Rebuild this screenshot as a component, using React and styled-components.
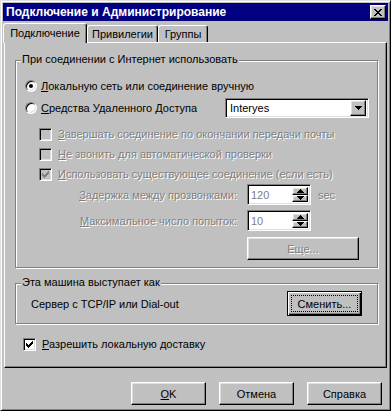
import React from "react";
import styled, { createGlobalStyle, css } from "styled-components";

const GlobalStyle = createGlobalStyle`
  body {
    margin: 0;
    background: #c0c0c0;
    font-family: "Liberation Sans", Arial, sans-serif;
    font-size: 11px;
    color: #000;
  }
`;

const raised = css`
  border: 1px solid;
  border-color: #fff #000 #000 #fff;
  box-shadow: inset -1px -1px #808080, inset 1px 1px #dfdfdf;
`;

const sunken = css`
  border: 1px solid;
  border-color: #808080 #fff #fff #808080;
  box-shadow: inset 1px 1px #000, inset -1px -1px #dfdfdf;
`;

const CLOSE_X = [
  "XX....XX",
  ".XX..XX.",
  "..XXXX..",
  "...XX...",
  "..XXXX..",
  ".XX..XX.",
  "XX....XX",
];
const CHECK = [
  "......X",
  ".....XX",
  "X...XXX",
  "XX.XXX.",
  "XXXXX..",
  ".XXX...",
  "..X....",
];
const ARROW_DOWN = ["XXXXXXX", ".XXXXX.", "..XXX..", "...X..."];
const ARROW_UP = [...ARROW_DOWN].reverse();

const Pixels = ({ rows, color = "#000" }) => (
  <svg
    width={rows[0].length}
    height={rows.length}
    shapeRendering="crispEdges"
    style={{ display: "block" }}
  >
    {rows.flatMap((r, y) =>
      [...r].map((c, x) =>
        c === "X" ? (
          <rect key={`${x}-${y}`} x={x} y={y} width="1" height="1" fill={color} />
        ) : null
      )
    )}
  </svg>
);

const Checkbox = ({ checked, disabled }) => (
  <CheckBoxBox $disabled={disabled}>
    {checked && <Pixels rows={CHECK} color={disabled ? "#808080" : "#000"} />}
  </CheckBoxBox>
);

const Radio = ({ checked }) => (
  <RadioBox>{checked && <RadioDot />}</RadioBox>
);

const Spin = ({ value }) => (
  <SpinBox>
    <SpinValue>{value}</SpinValue>
    <SpinButtons>
      <SpinButton>
        <Pixels rows={ARROW_UP} />
      </SpinButton>
      <SpinButton>
        <Pixels rows={ARROW_DOWN} />
      </SpinButton>
    </SpinButtons>
  </SpinBox>
);

const App = () => {
  return (
    <>
      <GlobalStyle />
      <Window>
        <TitleBar>
          <span>Подключение и Администрирование</span>
          <CloseButton>
            <Pixels rows={CLOSE_X} />
          </CloseButton>
        </TitleBar>

        <Body>
          <TabRow>
            <Tab $w={84} $active $ml={-1}>
              Подключение
            </Tab>
            <Tab $w={71}>Привилегии</Tab>
            <Tab $w={50}>Группы</Tab>
          </TabRow>

          <Panel>
            <GroupBox $h={208} $mt={0} $pad="0 8px 0 9px">
              <Legend>При соединении с Интернет использовать</Legend>

              <Row $h={16} $mt={17}>
                <Radio checked />
                <Label $ml={4}>
                  <U>Л</U>окальную сеть или соединение вручную
                </Label>
              </Row>

              <Row $h={20} $mt={4}>
                <Radio />
                <Label $ml={4}>
                  <U>С</U>редства Удаленного Доступа
                </Label>
                <Combo>
                  <ComboText>Interyes</ComboText>
                  <ComboButton>
                    <Pixels rows={ARROW_DOWN} />
                  </ComboButton>
                </Combo>
              </Row>

              <Row $h={16} $mt={8} $pl={14}>
                <Checkbox disabled />
                <Label $ml={6} $disabled>
                  <U>З</U>авершать соединение по окончании передачи почты
                </Label>
              </Row>

              <Row $h={16} $mt={4} $pl={14}>
                <Checkbox disabled />
                <Label $ml={6} $disabled>
                  <U>Н</U>е звонить для автоматической проверки
                </Label>
              </Row>

              <Row $h={16} $mt={4} $pl={14}>
                <Checkbox checked disabled />
                <Label $ml={6} $disabled>
                  <U>И</U>спользовать существующее соединение (если есть)
                </Label>
              </Row>

              <Row $h={21} $mt={2}>
                <FieldLabel>
                  <U>З</U>адержка между прозвонками:
                </FieldLabel>
                <Spin value="120" />
                <Label $ml={7} $disabled>
                  sec
                </Label>
              </Row>

              <Row $h={21} $mt={5}>
                <FieldLabel>
                  <U>М</U>аксимальное число попыток:
                </FieldLabel>
                <Spin value="10" />
              </Row>

              <Row $h={23} $mt={6}>
                <Button $w={112} $ml={222} disabled>
                  Еще...
                </Button>
              </Row>
            </GroupBox>

            <GroupBox $h={41} $mt={15} $pad="0 15px 0 15px">
              <Legend>Эта машина выступает как</Legend>
              <Row $h={39}>
                <Label>Сервер с TCP/IP или Dial-out</Label>
                <DefaultButton>
                  <FocusRing>Сменить...</FocusRing>
                </DefaultButton>
              </Row>
            </GroupBox>

            <Row $h={16} $mt={12} $pl={8}>
              <Checkbox checked />
              <Label $ml={6}>
                <U>Р</U>азрешить локальную доставку
              </Label>
            </Row>
          </Panel>
        </Body>

        <ButtonRow>
          <Button $w={75}>
            <U>O</U>K
          </Button>
          <Button $w={75}>Отмена</Button>
          <Button $w={75}>Справка</Button>
        </ButtonRow>
      </Window>
    </>
  );
};

const Window = styled.div`
  box-sizing: border-box;
  width: 391px;
  height: 411px;
  padding: 2px;
  background: #c0c0c0;
  border: 1px solid;
  border-color: #dfdfdf #000 #000 #dfdfdf;
  box-shadow: inset 1px 1px #fff, inset -1px -1px #808080;
  display: flex;
  flex-direction: column;
`;

const TitleBar = styled.div`
  height: 18px;
  flex-shrink: 0;
  background: #000080;
  color: #fff;
  font-size: 12px;
  font-weight: bold;
  display: flex;
  align-items: center;
  justify-content: space-between;
  padding: 0 2px 0 3px;
`;

const CloseButton = styled.div`
  ${raised};
  box-sizing: border-box;
  width: 16px;
  height: 14px;
  background: #c0c0c0;
  display: flex;
  align-items: center;
  justify-content: center;
`;

const Body = styled.div`
  padding: 2px 1px 0 1px;
`;

const TabRow = styled.div`
  display: flex;
  align-items: flex-end;
  height: 19px;
`;

const Tab = styled.div`
  box-sizing: border-box;
  width: ${(p) => p.$w}px;
  height: ${(p) => (p.$active ? 20 : 17)}px;
  margin-left: ${(p) => p.$ml || 0}px;
  margin-bottom: ${(p) => (p.$active ? -1 : 0)}px;
  padding-bottom: ${(p) => (p.$active ? 2 : 0)}px;
  border: 1px solid;
  border-bottom: none;
  border-color: #fff #000 transparent #fff;
  border-radius: 3px 3px 0 0;
  box-shadow: inset -1px 0 #808080;
  background: #c0c0c0;
  position: relative;
  z-index: ${(p) => (p.$active ? 1 : 0)};
  display: flex;
  align-items: center;
  justify-content: center;
`;

const Panel = styled.div`
  box-sizing: border-box;
  height: 326px;
  border: 1px solid;
  border-color: #fff #000 #000 #fff;
  box-shadow: inset -1px -1px #808080;
  padding: 17px 8px 0 10px;
  display: flex;
  flex-direction: column;
`;

const GroupBox = styled.div`
  position: relative;
  box-sizing: border-box;
  height: ${(p) => p.$h}px;
  margin-top: ${(p) => p.$mt}px;
  border: 1px solid #808080;
  box-shadow: inset 1px 1px #fff, 1px 1px #fff;
  padding: ${(p) => p.$pad};
  display: flex;
  flex-direction: column;
`;

const Legend = styled.span`
  position: absolute;
  top: -8px;
  left: 5px;
  padding: 0 1px;
  line-height: 13px;
  background: #c0c0c0;
`;

const Row = styled.div`
  display: flex;
  align-items: center;
  flex-shrink: 0;
  height: ${(p) => p.$h}px;
  margin-top: ${(p) => p.$mt || 0}px;
  padding-left: ${(p) => p.$pl || 0}px;
`;

const Label = styled.span`
  margin-left: ${(p) => p.$ml || 0}px;
  white-space: nowrap;
  color: ${(p) => (p.$disabled ? "#808080" : "#000")};
  text-shadow: ${(p) => (p.$disabled ? "1px 1px 0 #fff" : "none")};
`;

const FieldLabel = styled.span`
  width: 212px;
  margin-right: 10px;
  text-align: right;
  white-space: nowrap;
  color: #808080;
  text-shadow: 1px 1px 0 #fff;
`;

const U = styled.span`
  text-decoration: underline;
`;

const RadioBox = styled.div`
  box-sizing: border-box;
  width: 12px;
  height: 12px;
  flex-shrink: 0;
  border-radius: 50%;
  border: 1px solid;
  border-color: #808080 #fff #fff #808080;
  box-shadow: inset 1px 1px #000, inset -1px -1px #dfdfdf;
  background: #fff;
  display: flex;
  align-items: center;
  justify-content: center;
`;

const RadioDot = styled.div`
  width: 4px;
  height: 4px;
  border-radius: 50%;
  background: #000;
`;

const CheckBoxBox = styled.div`
  ${sunken};
  box-sizing: border-box;
  width: 13px;
  height: 13px;
  flex-shrink: 0;
  background: ${(p) => (p.$disabled ? "#c0c0c0" : "#fff")};
  display: flex;
  align-items: center;
  justify-content: center;
`;

const Combo = styled.div`
  ${sunken};
  box-sizing: border-box;
  width: 144px;
  height: 20px;
  margin-left: auto;
  background: #fff;
  display: flex;
  align-items: center;
  padding: 2px;
`;

const ComboText = styled.span`
  flex: 1;
  padding-left: 2px;
`;

const ComboButton = styled.div`
  ${raised};
  box-sizing: border-box;
  width: 16px;
  height: 16px;
  background: #c0c0c0;
  display: flex;
  align-items: center;
  justify-content: center;
`;

const SpinBox = styled.div`
  ${sunken};
  box-sizing: border-box;
  width: 64px;
  height: 21px;
  background: #fff;
  display: flex;
  padding: 2px;
`;

const SpinValue = styled.span`
  flex: 1;
  align-self: center;
  padding-left: 1px;
  color: #808080;
`;

const SpinButtons = styled.div`
  width: 16px;
  display: flex;
  flex-direction: column;
`;

const SpinButton = styled.div`
  ${raised};
  box-sizing: border-box;
  flex: 1;
  background: #c0c0c0;
  display: flex;
  align-items: center;
  justify-content: center;
`;

const Button = styled.div`
  ${raised};
  box-sizing: border-box;
  width: ${(p) => p.$w}px;
  height: 23px;
  margin-left: ${(p) => p.$ml || 0}px;
  background: #c0c0c0;
  display: flex;
  align-items: center;
  justify-content: center;
  color: ${(p) => (p.disabled ? "#808080" : "#000")};
  text-shadow: ${(p) => (p.disabled ? "1px 1px 0 #fff" : "none")};
`;

const DefaultButton = styled.div`
  box-sizing: border-box;
  width: 75px;
  height: 25px;
  margin-left: auto;
  border: 1px solid #000;
  box-shadow: inset 1px 1px #fff, inset -1px -1px #000, inset -2px -2px #808080;
  background: #c0c0c0;
  display: flex;
  padding: 3px;
`;

const FocusRing = styled.span`
  flex: 1;
  border: 1px dotted #000;
  display: flex;
  align-items: center;
  justify-content: center;
`;

const ButtonRow = styled.div`
  display: flex;
  justify-content: flex-end;
  gap: 13px;
  margin-top: 14px;
  padding-right: 6px;
`;

export default App;
